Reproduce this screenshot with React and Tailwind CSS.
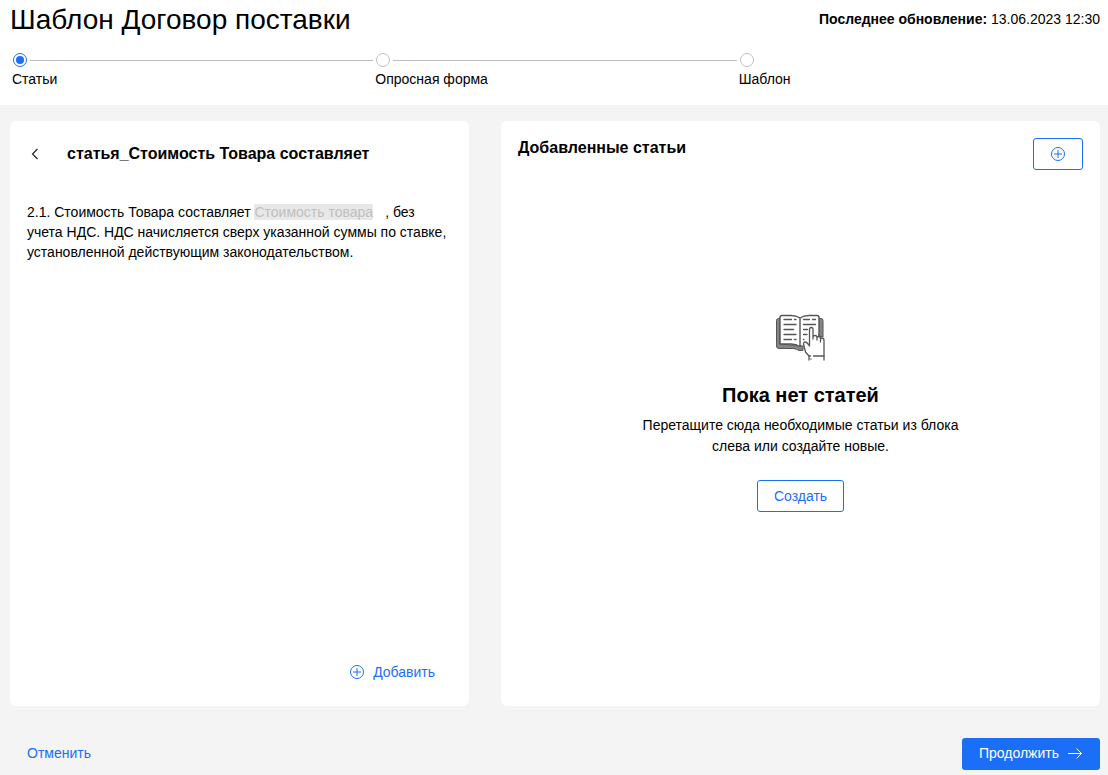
import React from 'react';

const steps = [
  { id: 'articles', label: 'Статьи' },
  { id: 'form', label: 'Опросная форма' },
  { id: 'template', label: 'Шаблон' },
];

const PlusCircle = () => (
  <svg width="14" height="14" viewBox="0 0 14 14" fill="none" stroke="currentColor" aria-hidden="true">
    <circle cx="7" cy="7" r="6.5" />
    <path d="M7 3v8M3 7h8" />
  </svg>
);

const BookIcon = () => (
  <svg width="51" height="48" viewBox="1 0 51 48" fill="none" stroke="#555" strokeLinecap="round" strokeLinejoin="round" aria-hidden="true">
    {/* Cover */}
    <path d="M6 4.500H4.500Q2.500 4.500 2.500 6.500V32Q2.500 34.500 5 34.500H19Q23 35 25 36.500H29V32L6 30Z" fill="#858585" />
    <path d="M45 4.500H47Q49 4.500 49 6.500V23L45 22Z" fill="#858585" />
    {/* Pages */}
    <path d="M26 4C23 2 20 1.500 17 1.500H8Q6 1.500 6 3.500V30H17Q22 30 26 32.500V4C29 2 32 1.500 35 1.500H43Q45 1.500 45 3.500V21" fill="#fff" strokeWidth="1.400" />
    {/* Text lines */}
    <path
      d="M10 5.500H17.500M20.500 5.500H22M10 10.500H22M10 15.500H19.500M10 20.500H22M10 25.500H17.500M20.500 25.500H22M29.500 5.500H35.500M38.500 5.500H41.500M29.500 10.500H41.500M29.500 15.500H33.500M29.500 20.500H33M29.500 25.500H30"
      strokeWidth="1.300"
    />
    {/* Hand */}
    <path
      d="M35 46V42L31.500 38L29.500 30Q29.500 28 31 28Q33 28 35.500 32V15.500Q35.500 13.500 37.300 13.500Q39 13.500 39 15.500V25V23Q39 21.500 41 21.500Q43 21.500 43 23.500V26V24.500Q43 22.500 44.800 22.500Q46.500 22.500 46.500 24.500V28V25.500Q46.500 24 48 24Q50 24 50 26.500V46"
      fill="#fff"
      strokeWidth="1.300"
    />
    <path d="M35 42H36.500M39.500 42H50M37 45V45.200" strokeWidth="1.300" />
  </svg>
);

const Stepper = () => (
  <div className="grid grid-cols-3 mt-[13px]">
    {steps.map((step, i) => (
      <div key={step.id} className="pl-0.5">
        <div className="flex items-center pl-px">
          <input
            type="radio"
            name="step"
            id={step.id}
            defaultChecked={i === 0}
            className="appearance-none w-3.5 h-3.5 shrink-0 rounded-full border border-[#bfbfbf] p-0.5 bg-clip-content checked:border-[#1b6ef7] checked:bg-[#1b6ef7]"
          />
          {i < steps.length - 1 && <div className="flex-1 h-px bg-[#bfbfbf] ml-[3px]" />}
        </div>
        <label htmlFor={step.id} className="block mt-0.5 leading-5">
          {step.label}
        </label>
      </div>
    ))}
  </div>
);

const ArticlePanel = () => (
  <section className="bg-white rounded-md p-[17px] flex flex-col">
    <div className="flex items-center h-8">
      <button type="button" aria-label="Назад" className="w-4 h-8 flex items-center justify-center">
        <svg width="8" height="12" viewBox="0 0 8 12" fill="none" stroke="#222" strokeWidth="1.200" aria-hidden="true">
          <path d="M6.500 1L1.500 6L6.500 11" />
        </svg>
      </button>
      <h2 className="ml-6 text-base font-bold leading-6">статья_Стоимость Товара составляет</h2>
    </div>
    <p className="mt-8 leading-5">
      2.1. Стоимость Товара составляет{' '}
      <span className="bg-[#e8e8e8] text-[#bfbfbf] mr-3">Стоимость товара</span>, без учета НДС. НДС начисляется
      сверх указанной суммы по ставке, установленной действующим законодательством.
    </p>
    <button type="button" className="mt-auto self-end mr-[17px] h-[34px] flex items-center gap-[9px] text-[#1b6ef7]">
      <PlusCircle />
      Добавить
    </button>
  </section>
);

const AddedPanel = () => (
  <section className="bg-white rounded-md p-[17px] flex flex-col">
    <div className="flex justify-between items-start">
      <h2 className="text-base font-bold leading-5">Добавленные статьи</h2>
      <button
        type="button"
        aria-label="Добавить статью"
        className="w-[50px] h-8 rounded-[3px] border border-[#1b6ef7] text-[#1b6ef7] flex items-center justify-center"
      >
        <PlusCircle />
      </button>
    </div>
    <div className="flex-1 flex flex-col items-center justify-center text-center pb-[34px]">
      <BookIcon />
      <h3 className="mt-[19px] text-xl font-bold leading-7">Пока нет статей</h3>
      <p className="mt-1.5 max-w-[340px] leading-[21px]">
        Перетащите сюда необходимые статьи из блока слева или создайте новые.
      </p>
      <button type="button" className="mt-[23px] h-8 px-4 rounded-[3px] border border-[#1b6ef7] text-[#1b6ef7]">
        Создать
      </button>
    </div>
  </section>
);

const App = () => {
  return (
    <div className="min-h-screen flex flex-col bg-[#f4f4f4] text-black text-sm font-['Liberation_Sans',Arial,sans-serif]">
      <header className="bg-white pl-2.5 pr-2 pb-4">
        <div className="flex justify-between">
          <h1 className="text-[28px] leading-10">Шаблон Договор поставки</h1>
          <p className="leading-[38px]">
            <b>Последнее обновление:</b> 13.06.2023 12:30
          </p>
        </div>
        <Stepper />
      </header>

      <main className="flex-1 grid grid-cols-[459fr_599fr] gap-8 pl-2.5 pr-2 pt-4">
        <ArticlePanel />
        <AddedPanel />
      </main>

      <footer className="flex justify-between items-center pl-[27px] pr-2 pt-8 pb-[5px]">
        <button type="button" className="h-8 pb-0.5 text-[#1b6ef7]">Отменить</button>
        <button type="button" className="h-8 pb-0.5 px-[17px] rounded-[3px] bg-[#1b6ef7] text-white flex items-center gap-2">
          Продолжить
          <svg width="16" height="12" viewBox="0 0 16 12" fill="none" stroke="currentColor" aria-hidden="true">
            <path d="M1 6.500H14.500M9.500 1.500L14.500 6.500L9.500 11.500" />
          </svg>
        </button>
      </footer>
    </div>
  );
};

export default App;
